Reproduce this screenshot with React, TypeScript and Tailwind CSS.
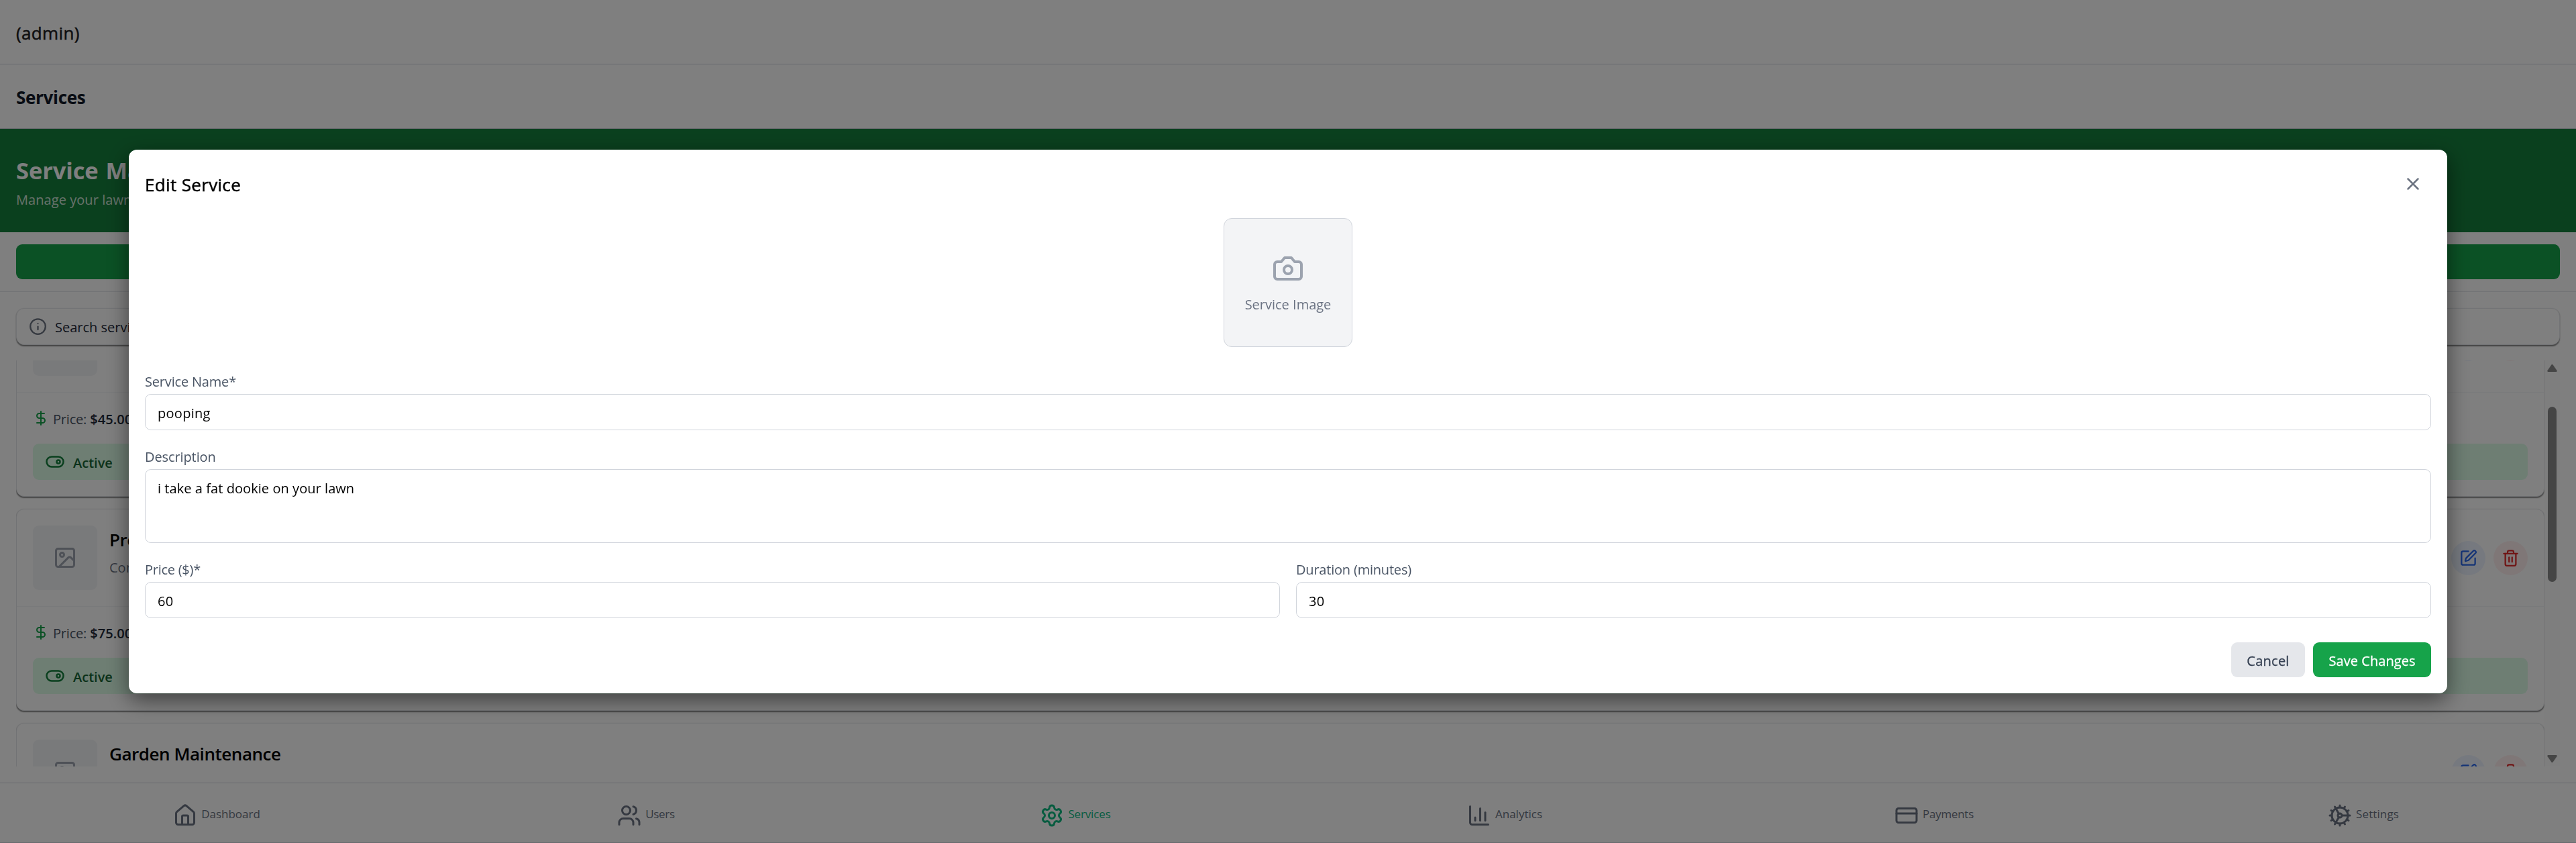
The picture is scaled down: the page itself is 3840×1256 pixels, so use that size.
import type { ReactNode } from 'react';
import {
  House,
  Users,
  Settings,
  ChartColumn,
  CreditCard,
  Cog,
  Info,
  DollarSign,
  Image as ImageIcon,
  SquarePen,
  Trash2,
  X,
} from 'lucide-react';

function ToggleIcon() {
  return (
    <svg width="30" height="30" viewBox="0 0 24 24" fill="none" stroke="#15803d" strokeWidth="2" strokeLinecap="round" strokeLinejoin="round">
      <rect width="20" height="12" x="2" y="6" rx="6" ry="6" />
      <circle cx="16" cy="12" r="2" />
    </svg>
  );
}

function CameraIcon() {
  return (
    <svg width="48" height="48" viewBox="0 0 24 24" fill="none" stroke="#9ca3af" strokeWidth="2" strokeLinecap="round" strokeLinejoin="round">
      <path d="M14.5 4h-5L7 7H4a2 2 0 0 0-2 2v9a2 2 0 0 0 2 2h16a2 2 0 0 0 2-2V9a2 2 0 0 0-2-2h-3l-2.5-3z" />
      <circle cx="12" cy="13" r="3" />
    </svg>
  );
}

type Service = { name: string; description: string; price: string };

const services: Service[] = [
  { name: '', description: '', price: '$45.00' },
  { name: 'Premium', description: 'Complete', price: '$75.00' },
  { name: 'Garden Maintenance', description: '', price: '$60.00' },
];

function ServiceCard({ service }: { service: Service }) {
  return (
    <div className="shrink-0 rounded-[12px] border border-gray-200 bg-white shadow-[0_1.5px_1.5px_rgba(0,0,0,0.45)]">
      <div className="flex items-center border-b border-gray-100 p-6">
        <div className="flex size-24 shrink-0 items-center justify-center rounded-[9px] bg-gray-100">
          <ImageIcon size={36} color="#9ca3af" />
        </div>
        <div className="ml-[18px] h-24 flex-1">
          <div className="text-[26px] leading-[42px] font-semibold tracking-[-0.45px] text-black">{service.name}</div>
          <div className="mt-[6px] leading-[30px] text-gray-500">{service.description}</div>
        </div>
        <div className="flex gap-3">
          <div className="flex size-[51px] items-center justify-center rounded-full bg-[#ecf3fe]">
            <SquarePen size={27} color="#2a68ec" />
          </div>
          <div className="flex size-[51px] items-center justify-center rounded-full bg-[#feefef]">
            <Trash2 size={27} color="#e02b2b" />
          </div>
        </div>
      </div>
      <div className="p-6">
        <div className="flex h-7 items-center">
          <DollarSign size={24} color="#16a34a" />
          <span className="ml-[6px] pt-1 tracking-[-0.2px] text-gray-600">Price:</span>
          <span className="ml-[5px] pt-1 font-semibold tracking-[0.1px] text-gray-800">{service.price}</span>
        </div>
        <div className="mt-6 flex h-[54px] items-center gap-3 rounded-[9px] bg-[#dcfce7] px-[18px]">
          <ToggleIcon />
          <span className="pt-1 font-semibold text-[#166534]">Active</span>
        </div>
      </div>
    </div>
  );
}

function NavItem({ icon, label, className }: { icon: ReactNode; label: string; className: string }) {
  return (
    <div className={`flex flex-1 items-center justify-center gap-[6px] pl-[6px] text-[17px] ${className}`}>
      <div className="pt-2">{icon}</div>
      <span className="pt-1 leading-6">{label}</span>
    </div>
  );
}

function Field({ label, labelClass, children }: { label: string; labelClass: string; children: ReactNode }) {
  return (
    <div className="flex-1">
      <div className={`mb-[5px] h-7 leading-[30px] text-gray-600 ${labelClass}`}>{label}</div>
      {children}
    </div>
  );
}

function EditServiceDialog() {
  return (
    <div className="w-[90%] rounded-[12px] bg-white p-6 shadow-[0_10px_32px_rgba(0,0,0,0.5)]">
      <div className="flex h-[54px] items-center justify-between">
        <div className="pt-[2px] text-[26px] leading-[42px] font-medium tracking-[0.34px] text-black [-webkit-text-stroke:0.5px]">Edit Service</div>
        <div className="p-3">
          <X size={30} color="#6b7280" />
        </div>
      </div>
      <div className="mt-6 flex justify-center">
        <div className="flex size-48 flex-col items-center justify-center rounded-[12px] border border-gray-300 bg-gray-100">
          <CameraIcon />
          <div className="mt-[14px] -mb-[2px] leading-[31px] text-gray-500">Service Image</div>
        </div>
      </div>
      <div className="mt-[37px] flex">
        <Field label="Service Name*" labelClass="tracking-[-0.18px]">
          <div className="flex h-[54px] items-center rounded-[9px] border border-gray-300 px-[18px] pt-1 tracking-[0.28px] text-black">pooping</div>
        </Field>
      </div>
      <div className="mt-[25px] flex">
        <Field label="Description" labelClass="tracking-[-0.1px]">
          <div className="h-[110px] rounded-[9px] border border-gray-300 px-[18px] py-[14px] leading-7 tracking-[0.06px] text-black">
            i take a fat dookie on your lawn
          </div>
        </Field>
      </div>
      <div className="mt-[25px] flex gap-6">
        <Field label="Price ($)*" labelClass="tracking-[-0.26px]">
          <div className="flex h-[54px] items-center rounded-[9px] border border-gray-300 px-[18px] pt-1 tracking-[0.3px] text-black">60</div>
        </Field>
        <Field label="Duration (minutes)" labelClass="tracking-[-0.2px]">
          <div className="flex h-[54px] items-center rounded-[9px] border border-gray-300 px-[18px] pt-1 tracking-[0.3px] text-black">30</div>
        </Field>
      </div>
      <div className="mt-9 flex justify-end gap-3">
        <div className="flex h-[52px] w-[110px] items-center justify-center rounded-[9px] bg-gray-200 pt-1 font-medium tracking-[0.24px] text-gray-700 [-webkit-text-stroke:0.3px]">
          Cancel
        </div>
        <div className="flex h-[52px] w-[176px] items-center justify-center rounded-[9px] bg-[#16a34a] pt-1 font-medium tracking-[0.06px] text-white [-webkit-text-stroke:0.3px]">
          Save Changes
        </div>
      </div>
    </div>
  );
}

export default function App() {
  return (
    <div className="flex h-[1256px] w-full flex-col overflow-hidden bg-white font-['Open_Sans','Noto_Sans',sans-serif] text-[20px]">
      <div className="flex h-24 shrink-0 items-center border-b border-gray-300 px-6 pt-1 text-[26px] font-medium tracking-[0.35px] text-[#1c1c1e] [-webkit-text-stroke:0.5px]">
        (admin)
      </div>
      <div className="flex h-24 shrink-0 items-center border-b border-gray-300 px-6 pt-1 text-[26px] font-bold tracking-[-0.3px] text-gray-900">
        Services
      </div>
      <div className="h-[154px] shrink-0 bg-[#15803d] px-6 pt-[38px] text-white">
        <div className="text-[34.5px] leading-[48px] font-bold tracking-[-0.1px] [word-spacing:2px]">Service Management</div>
        <div className="mt-[5px] leading-[30px] tracking-[0.06px] opacity-80">Manage your lawn care services</div>
      </div>
      <div className="shrink-0 border-b border-gray-200 px-6 py-[18px]">
        <div className="h-[52px] rounded-[9px] bg-[#16a34a]" />
      </div>
      <div className="flex min-h-0 flex-1 flex-col bg-[#fefefe] p-6">
        <div className="flex h-[55px] shrink-0 items-center gap-3 rounded-[12px] border border-gray-200 bg-white px-[18px] shadow-[0_1.5px_1.5px_rgba(0,0,0,0.45)]">
          <Info size={27} color="#6b7280" />
          <span className="pt-[3px] text-gray-800">Search services</span>
        </div>
        <div className="mt-[23px] flex min-h-0 flex-1 overflow-hidden">
          <div className="-mt-[98px] flex min-w-0 flex-1 flex-col gap-[18px]">
            {services.map((s) => (
              <ServiceCard key={s.price} service={s} />
            ))}
          </div>
          <div className="flex w-[23px] flex-col items-center bg-[#fcfcfc] py-[6px]">
            <svg width="15" height="11" viewBox="0 0 15 11" fill="#8b8b8b">
              <path d="M6.2 0.7a1.6 1.6 0 0 1 2.6 0l5.7 8.2a1.3 1.3 0 0 1-1.1 2.1H1.6a1.3 1.3 0 0 1-1.1-2.1z" />
            </svg>
            <div className="mt-[52px] h-[261px] w-[13px] rounded-full bg-[#8b8b8b]" />
            <svg className="mt-auto" width="15" height="11" viewBox="0 0 15 11" fill="#8b8b8b">
              <path d="M6.2 10.3a1.6 1.6 0 0 0 2.6 0l5.7-8.2a1.3 1.3 0 0 0-1.1-2.1H1.6a1.3 1.3 0 0 0-1.1 2.1z" />
            </svg>
          </div>
        </div>
      </div>
      <div className="flex h-[90px] shrink-0 border-y border-gray-300 bg-white">
        <NavItem icon={<House size={36} />} label="Dashboard" className="text-gray-500" />
        <NavItem icon={<Users size={36} />} label="Users" className="tracking-[-0.35px] text-gray-500" />
        <NavItem icon={<Settings size={36} />} label="Services" className="tracking-[-0.15px] text-[#10b981]" />
        <NavItem icon={<ChartColumn size={36} />} label="Analytics" className="text-gray-500" />
        <NavItem icon={<CreditCard size={36} />} label="Payments" className="tracking-[-0.25px] text-gray-500" />
        <NavItem icon={<Cog size={36} />} label="Settings" className="tracking-[0.1px] text-gray-500" />
      </div>
      <div className="fixed inset-0 flex items-center justify-center bg-black/50">
        <EditServiceDialog />
      </div>
    </div>
  );
}
